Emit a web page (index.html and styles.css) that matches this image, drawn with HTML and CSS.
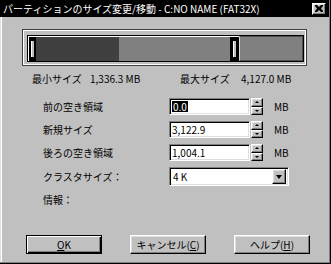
FILE: index.html
```html
<!DOCTYPE html>
<html lang="ja">
<head>
<meta charset="utf-8">
<title>パーティションのサイズ変更/移動</title>
<link rel="stylesheet" href="styles.css">
</head>
<body>
<div class="win">
  <div class="titlebar">
    <span class="title-text">パーティションのサイズ変更/移動 - C:NO NAME (FAT32X)</span>
    <span class="close raised">
      <svg width="8" height="7" viewBox="0 0 8 7"><path d="M0 0h2l2 2 2-2h2v1l-2 2.5 2 2.5v1h-2l-2-2-2 2h-2v-1l2-2.5-2-2.5z" fill="#000"/></svg>
    </span>
  </div>

  <div class="frame">
    <div class="bar">
      <div class="sel">
        <div class="handle h-left"><span class="grip"></span></div>
        <div class="used"></div>
        <div class="free"></div>
        <div class="handle h-right"><span class="grip"></span></div>
      </div>
      <div class="unalloc"></div>
    </div>
  </div>

  <div class="stats">
    <span>最小サイズ</span>
    <span>1,336.3 MB</span>
    <span>最大サイズ</span>
    <span>4,127.0 MB</span>
  </div>

  <div class="form">
    <span class="lbl">前の空き領域</span>
    <span class="field"><span class="hl">0.0</span></span>
    <span class="spin"><span class="raised up"><i class="tri-up"></i></span><span class="raised dn"><i class="tri-dn"></i></span></span>
    <span class="unit">MB</span>

    <span class="lbl">新規サイズ</span>
    <span class="field">3,122.9</span>
    <span class="spin"><span class="raised up"><i class="tri-up"></i></span><span class="raised dn"><i class="tri-dn"></i></span></span>
    <span class="unit">MB</span>

    <span class="lbl">後ろの空き領域</span>
    <span class="field">1,004.1</span>
    <span class="spin"><span class="raised up"><i class="tri-up"></i></span><span class="raised dn"><i class="tri-dn"></i></span></span>
    <span class="unit">MB</span>

    <span class="lbl">クラスタサイズ：</span>
    <span class="field combo"><span>4 K</span><span class="raised drop"><i class="tri-big"></i></span></span>

    <span class="lbl info">情報：</span>
  </div>

  <div class="buttons">
    <span class="btn default"><span class="btn-in"><u>O</u>K</span></span>
    <span class="btn"><span class="btn-in">キャンセル(<u>C</u>)</span></span>
    <span class="btn"><span class="btn-in">ヘルプ(<u>H</u>)</span></span>
  </div>
</div>
</body>
</html>
```

FILE: styles.css
```css
* { box-sizing: border-box; }
html, body { margin: 0; padding: 0; background: #c0c0c0; }
body {
  font-family: "Noto Sans CJK JP", "Noto Sans", sans-serif;
  font-size: 10px;
  color: #000;
}
.win {
  width: 331px;
  height: 264px;
  background: #c0c0c0;
  box-shadow: inset -1px -1px #000, inset -2px -2px #808080, inset 1px 0 #dfdfdf, inset 2px 0 #fff;
  overflow: hidden;
}
.titlebar {
  height: 17px;
  margin-right: 2px;
  background: #000;
  color: #fff;
  display: flex;
  align-items: center;
  justify-content: space-between;
  padding: 0 3px 0 3px;
}
.title-text { font-size: 10px; line-height: 17px; white-space: nowrap; }
.raised {
  background: #c0c0c0;
  border: 1px solid;
  border-color: #fff #000 #000 #fff;
  box-shadow: inset -1px -1px #808080, inset 1px 1px #dfdfdf;
}
.close {
  width: 14px;
  height: 12px;
  display: flex;
  align-items: center;
  justify-content: center;
}
.close svg { display: block; }

.frame {
  margin: 12px 0 0 22px;
  width: 285px;
  height: 37px;
  border: 1px solid #404040;
  box-shadow: inset 1px 1px #fff, inset -1px -1px #fff;
  padding: 5px 2px 3px 4px;
}
.bar {
  width: 277px;
  height: 27px;
  border: 1px solid #000;
  display: flex;
  background: #000;
}
.sel {
  width: 211px;
  display: flex;
  border-top: 1px solid #fff;
  border-left: 1px solid #fff;
}
.handle {
  background: #000;
  display: flex;
  align-items: center;
  justify-content: center;
}
.h-left { width: 7px; }
.h-right { width: 9px; }
.grip {
  width: 3px;
  height: 16px;
  background: #c0c0c0;
  border-left: 1px solid #fff;
}
.used { width: 83px; background: #404040; }
.free { width: 111px; background: #808080; }
.unalloc {
  flex: 1;
  background: #808080;
  border: 1px solid #505050;
  border-left-color: #dfdfdf;
}

.stats {
  margin-top: 7px;
  padding-left: 32px;
  display: grid;
  grid-template-columns: 58px 90px 61px auto;
  line-height: 12px;
  height: 12px;
}

.form {
  margin-top: 13px;
  padding-left: 43px;
  display: grid;
  grid-template-columns: 125px 81px 12px 25px;
  column-gap: 1px;
  row-gap: 6px;
  grid-template-rows: 17px 17px 17px 19px 12px;
  align-items: center;
}
.form > .unit { padding-left: 10px; }
.lbl { line-height: 12px; padding-top: 1px; }
.info { grid-column: 1 / -1; margin-top: 2px; }
.field {
  height: 17px;
  background: #fff;
  border: 1px solid;
  border-color: #808080 #fff #fff #808080;
  box-shadow: inset 1px 1px #000, inset -1px -1px #dfdfdf;
  padding: 0 2px 0 2px;
  line-height: 15px;
  white-space: nowrap;
  display: flex;
  align-items: center;
}
.hl { background: #000; color: #fff; line-height: 11px; padding: 0 1px; }
.spin {
  height: 17px;
  display: flex;
  flex-direction: column;
}
.spin .raised {
  flex: 1;
  display: flex;
  align-items: center;
  justify-content: center;
}
.up { height: 9px; }
.dn { height: 8px; }
.tri-up, .tri-dn, .tri-big { display: block; width: 0; height: 0; }
.tri-up {
  border-left: 2px solid transparent;
  border-right: 2px solid transparent;
  border-bottom: 2px solid #000;
}
.tri-dn {
  border-left: 2px solid transparent;
  border-right: 2px solid transparent;
  border-top: 2px solid #000;
}
.combo {
  grid-column: 2 / 5;
  height: 19px;
  justify-content: space-between;
  padding: 2px 2px 2px 3px;
}
.drop {
  width: 14px;
  height: 15px;
  display: flex;
  align-items: center;
  justify-content: center;
}
.tri-big {
  border-left: 3px solid transparent;
  border-right: 3px solid transparent;
  border-top: 4px solid #000;
}

.buttons {
  margin-top: 31px;
  padding-left: 26px;
  display: flex;
  gap: 28px;
}
.btn {
  width: 76px;
  height: 19px;
  background: #c0c0c0;
  border: 1px solid;
  border-color: #fff #000 #000 #fff;
  box-shadow: inset -1px -1px #808080, inset 1px 1px #dfdfdf;
  display: flex;
}
.btn.default {
  border-color: #000;
  box-shadow: inset 1px 1px #fff, inset -1px -1px #000, inset -2px -2px #808080;
}
.btn-in {
  flex: 1;
  display: flex;
  align-items: center;
  justify-content: center;
  line-height: 12px;
}
u { text-decoration-thickness: 1px; text-underline-offset: 1px; }
```
